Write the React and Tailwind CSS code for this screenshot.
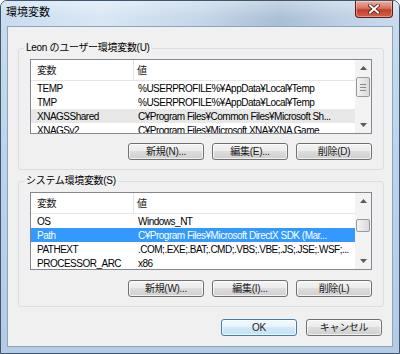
import React from 'react';

const userVars = [
  ['TEMP', '%USERPROFILE%¥AppData¥Local¥Temp'],
  ['TMP', '%USERPROFILE%¥AppData¥Local¥Temp'],
  ['XNAGSShared', 'C¥Program Files¥Common Files¥Microsoft Sh...', 'inactive'],
  ['XNAGSv2', 'C¥Program Files¥Microsoft XNA¥XNA Game'],
];

const sysVars = [
  ['OS', 'Windows_NT'],
  ['Path', 'C¥Program Files¥Microsoft DirectX SDK (Mar...', 'active'],
  ['PATHEXT', '.COM;.EXE;.BAT;.CMD;.VBS;.VBE;.JS;.JSE;.WSF;...'],
  ['PROCESSOR_ARC', 'x86'],
];

function Arrow({ up }) {
  return (
    <div className="flex h-[16px] items-center justify-center">
      <svg width="7" height="4" viewBox="0 0 7 4">
        <path d={up ? 'M0 4 L3.5 0 L7 4 Z' : 'M0 0 L3.5 4 L7 0 Z'} fill="#5a5a5a" />
      </svg>
    </div>
  );
}

function ScrollBar({ gap, thumb, grip }) {
  return (
    <div className="flex w-[16px] shrink-0 flex-col bg-[#f3f3f3]">
      <Arrow up />
      <div style={{ height: gap }} />
      <div
        style={{ height: thumb }}
        className="mx-[1px] flex flex-col items-center justify-center gap-[2px] rounded-[2px] border border-[#9a9a9a] bg-[linear-gradient(to_right,#f3f3f3,#e6e6e6_50%,#d9d9d9)]"
      >
        {grip && (
          <>
            <div className="h-px w-[6px] bg-[#8a8a8a]" />
            <div className="h-px w-[6px] bg-[#8a8a8a]" />
            <div className="h-px w-[6px] bg-[#8a8a8a]" />
          </>
        )}
      </div>
      <div className="flex-1" />
      <Arrow />
    </div>
  );
}

function VarList({ rows, gap, thumb, grip, height }) {
  return (
    <div style={{ height }} className="flex w-[342px] overflow-hidden border border-[#828790] bg-white tracking-[-0.5px]">
      <div className="flex min-w-0 flex-1 flex-col">
        <div className="flex h-[21px] shrink-0 items-center border-b border-[#e5e5e5] text-[#222]">
          <div className="flex h-full w-[103px] items-center border-r border-[#e3e3e3] pl-[6px]">変数</div>
          <div className="pl-[3px]">値</div>
        </div>
        {rows.map(([name, value, sel]) => (
          <div
            key={name}
            className={`flex h-[14px] shrink-0 items-center whitespace-nowrap ${
              sel === 'active' ? 'bg-[#3399ff] text-white' : sel === 'inactive' ? 'bg-[#e8e8e8] text-black' : 'text-black'
            }`}
          >
            <div className="w-[103px] shrink-0 overflow-hidden pl-[6px]">{name}</div>
            <div className="min-w-0 flex-1 pl-[4px]">{value}</div>
          </div>
        ))}
      </div>
      <ScrollBar gap={gap} thumb={thumb} grip={grip} />
    </div>
  );
}

function Btn({ children, def }) {
  return (
    <button
      type="button"
      className={`flex h-[17px] w-[76px] items-center justify-center rounded-[3px] border text-[10px] leading-none text-[#1a1a1a] shadow-[inset_0_0_0_1px_rgba(255,255,255,0.7)] ${
        def
          ? 'border-[#3c7fb1] bg-[linear-gradient(to_bottom,#f2f9fd_0%,#e5f2fa_50%,#d2e9f6_50%,#c4e1f3_100%)]'
          : 'border-[#707070] bg-[linear-gradient(to_bottom,#f4f4f4_0%,#ebebeb_50%,#dddddd_50%,#cfcfcf_100%)]'
      }`}
    >
      {children}
    </button>
  );
}

function Group({ label, children }) {
  return (
    <fieldset className="mx-[10px] rounded-[3px] border border-[#d5dfe5] px-[11px] pb-[9px] pt-[5px]">
      <legend className="ml-[-6px] px-[2px] leading-[12px] text-black">{label}</legend>
      {children}
    </fieldset>
  );
}

export default function App() {
  return (
    <div className="flex h-[354px] w-[400px] flex-col overflow-hidden rounded-t-[7px] border border-[#3f5670] bg-[linear-gradient(to_bottom,#c9dcef,#bfd4ea_40%,#b4cbe4)] font-['Liberation_Sans','Noto_Sans_CJK_JP',sans-serif] text-[10px] tracking-[-0.3px]">
      <div className="flex h-[25px] shrink-0 items-start justify-between bg-[linear-gradient(to_bottom,rgba(255,255,255,0.35),rgba(255,255,255,0)_70%),linear-gradient(to_right,#c8dbef_0%,#d9e7f5_25%,#c4d6e9_50%,#a9bfd6_70%,#bccfe4_85%,#c9dbee_100%)]">
        <span className="pl-[5px] pt-[5px] text-[11px] leading-[13px] tracking-normal text-black">環境変数</span>
        <div className="mr-[6px] flex h-[17px] w-[38px] items-center justify-center rounded-b-[4px] border border-t-0 border-[#5a1d14] bg-[linear-gradient(to_bottom,#eab0a2_0%,#d9735f_45%,#c4402a_55%,#d3614a_100%)] shadow-[inset_0_0_0_1px_rgba(255,255,255,0.35)]">
          <svg width="12" height="10" viewBox="0 0 12 10">
            <path d="M2 1.5 L10 8.5 M10 1.5 L2 8.5" stroke="#4a1a12" strokeWidth="3.6" strokeLinecap="square" />
            <path d="M2 1.5 L10 8.5 M10 1.5 L2 8.5" stroke="#ffffff" strokeWidth="2" strokeLinecap="square" />
          </svg>
        </div>
      </div>
      <div className="mx-[6px] mb-[6px] flex flex-1 flex-col border border-[#8da2bb] bg-[#f0f0f0]">
        <div className="mt-[15px]">
          <Group label="Leon のユーザー環境変数(U)">
            <VarList rows={userVars} gap={1} thumb={20} grip height={75} />
            <div className="mt-[9px] flex w-[342px] justify-end gap-[8px]">
              <Btn>新規(N)...</Btn>
              <Btn>編集(E)...</Btn>
              <Btn>削除(D)</Btn>
            </div>
          </Group>
        </div>
        <div className="mt-[5px]">
          <Group label="システム環境変数(S)">
            <VarList rows={sysVars} gap={10} thumb={13} height={78} />
            <div className="mt-[10px] flex w-[342px] justify-end gap-[8px]">
              <Btn>新規(W)...</Btn>
              <Btn>編集(I)...</Btn>
              <Btn>削除(L)</Btn>
            </div>
          </Group>
        </div>
        <div className="mr-[10px] mt-[12px] flex justify-end gap-[9px]">
          <Btn def>OK</Btn>
          <Btn>キャンセル</Btn>
        </div>
      </div>
    </div>
  );
}
